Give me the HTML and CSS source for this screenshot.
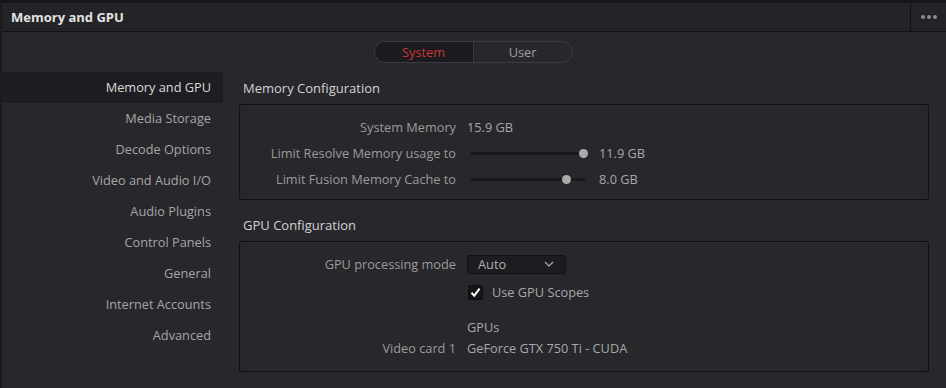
FILE: index.html
```html
<!DOCTYPE html>
<html lang="en">

<head>
    <meta charset="UTF-8">
    <title>Memory and GPU</title>
    <link rel="stylesheet" href="styles.css">
</head>

<body>
    <div class="window">
        <!-- Header -->
        <div class="header">
            <div class="title">Memory and GPU</div>
            <div class="more"><span></span><span></span><span></span></div>
        </div>

        <!-- System / User tabs -->
        <div class="tabs">
            <div class="tab active">System</div>
            <div class="tab">User</div>
        </div>

        <div class="body">
            <!-- Sidebar -->
            <div class="sidebar">
                <div class="nav-item active">Memory and GPU</div>
                <div class="nav-item">Media Storage</div>
                <div class="nav-item">Decode Options</div>
                <div class="nav-item">Video and Audio I/O</div>
                <div class="nav-item">Audio Plugins</div>
                <div class="nav-item">Control Panels</div>
                <div class="nav-item">General</div>
                <div class="nav-item">Internet Accounts</div>
                <div class="nav-item">Advanced</div>
            </div>

            <!-- Content -->
            <div class="content">
                <h3 class="section-title">Memory Configuration</h3>
                <div class="box memory-box">
                    <div class="label">System Memory</div>
                    <div class="value">15.9 GB</div>

                    <div class="label">Limit Resolve Memory usage to</div>
                    <div class="value slider-row">
                        <div class="slider"><div class="track"></div><div class="knob" style="left: 108px;"></div></div>
                        <span>11.9 GB</span>
                    </div>

                    <div class="label">Limit Fusion Memory Cache to</div>
                    <div class="value slider-row">
                        <div class="slider"><div class="track"></div><div class="knob" style="left: 91px;"></div></div>
                        <span>8.0 GB</span>
                    </div>
                </div>

                <h3 class="section-title second">GPU Configuration</h3>
                <div class="box gpu-box">
                    <div class="label">GPU processing mode</div>
                    <div class="value">
                        <div class="dropdown">
                            <span>Auto</span>
                            <svg width="10" height="6" viewBox="0 0 10 6"><path d="M1 1 L5 5 L9 1" fill="none" stroke="#a5a5a5" stroke-width="1.3"/></svg>
                        </div>
                    </div>

                    <div class="label"></div>
                    <div class="value check-row">
                        <div class="checkbox">
                            <svg width="13" height="13" viewBox="0 0 13 13"><path d="M2.5 6.8 L5.2 9.6 L10.6 2.6" fill="none" stroke="#ffffff" stroke-width="2"/></svg>
                        </div>
                        <span>Use GPU Scopes</span>
                    </div>

                    <div class="label"></div>
                    <div class="value gpus">GPUs</div>

                    <div class="label">Video card 1</div>
                    <div class="value">GeForce GTX 750 Ti - CUDA</div>
                </div>
            </div>
        </div>
    </div>
</body>

</html>
```

FILE: styles.css
```css
body {
    margin: 0;
    padding: 0;
    background-color: #28272c;
    font-family: 'Open Sans', 'Liberation Sans', sans-serif;
    font-size: 12.75px;
    color: #a3a3a3;
}

.window {
    width: 946px;
    height: 388px;
    box-sizing: border-box;
    border-top: 3px solid #161519;
    border-left: 2px solid #1c1b1f;
    background-color: #28272c;
    overflow: hidden;
}

/* Header */
.header {
    display: flex;
    height: 28px;
    background-color: #242328;
    border-bottom: 1px solid #121114;
}

.title {
    flex: 1;
    padding-left: 9px;
    line-height: 28px;
    font-size: 13px;
    font-weight: 700;
    color: #e2e2e2;
}

.more {
    width: 35px;
    display: flex;
    align-items: center;
    justify-content: center;
    gap: 2px;
    border-left: 1px solid #121114;
}

.more span {
    width: 4px;
    height: 4px;
    border-radius: 50%;
    background-color: #8c8c8c;
}

/* Tabs */
.tabs {
    display: flex;
    width: 197px;
    height: 20px;
    margin: 9px auto 9px auto;
    border: 1px solid #3c3b41;
    border-radius: 11px;
    overflow: hidden;
    position: relative;
    left: -1px;
}

.tab {
    flex: 1;
    text-align: center;
    line-height: 20px;
    color: #a0a0a0;
}

.tab.active {
    flex: 0 0 98px;
    background-color: #1b1a1e;
    border-right: 1px solid #3c3b41;
    color: #c8383b;
}

/* Body */
.body {
    display: flex;
}

.sidebar {
    width: 221px;
}

.nav-item {
    height: 31px;
    line-height: 31px;
    text-align: right;
    padding-right: 12px;
    color: #a6a6a6;
}

.nav-item.active {
    background-color: #1e1d22;
    color: #dadada;
}

.content {
    flex: 1;
    padding-left: 16px;
    padding-right: 17px;
}

.section-title {
    margin: 0;
    padding-left: 4px;
    font-size: 13px;
    font-weight: 400;
    line-height: 32px;
    color: #d2d2d2;
}

.section-title.second {
    margin-top: 9px;
}

.box {
    display: grid;
    grid-template-columns: 216px 1fr;
    column-gap: 11px;
    border: 1px solid #111013;
    border-radius: 2px;
}

.memory-box {
    padding: 9px 0 7px 0;
    grid-auto-rows: 26px;
}

.gpu-box {
    padding: 9px 0 12px 0;
    grid-template-rows: 26px 30px 30px 22px;
}

.label {
    text-align: right;
    align-self: center;
    color: #9b9b9b;
}

.value {
    display: flex;
    align-items: center;
    color: #a8a8a8;
}

.slider-row {
    gap: 14px;
}

.slider {
    position: relative;
    width: 114px;
    height: 10px;
    margin-left: 4px;
}

.track {
    position: absolute;
    left: 0;
    right: 0;
    top: 4px;
    height: 3px;
    background-color: #19181c;
}

.knob {
    position: absolute;
    top: 1px;
    width: 9px;
    height: 9px;
    border-radius: 50%;
    background-color: #ababab;
}

.dropdown {
    display: flex;
    align-items: center;
    justify-content: space-between;
    box-sizing: border-box;
    width: 99px;
    height: 19px;
    padding: 0 11px 0 10px;
    background-color: #1d1c21;
    border: 1px solid #111013;
    border-radius: 2px;
    color: #b0b0b0;
}

.check-row {
    gap: 9px;
}

.checkbox {
    display: flex;
    align-items: center;
    justify-content: center;
    width: 15px;
    height: 15px;
    margin-left: 1px;
    background-color: #151417;
    border: 1px solid #0e0d10;
    box-sizing: border-box;
    border-radius: 2px;
}

.gpus {
    align-items: flex-end;
    padding-bottom: 1px;
}
```
